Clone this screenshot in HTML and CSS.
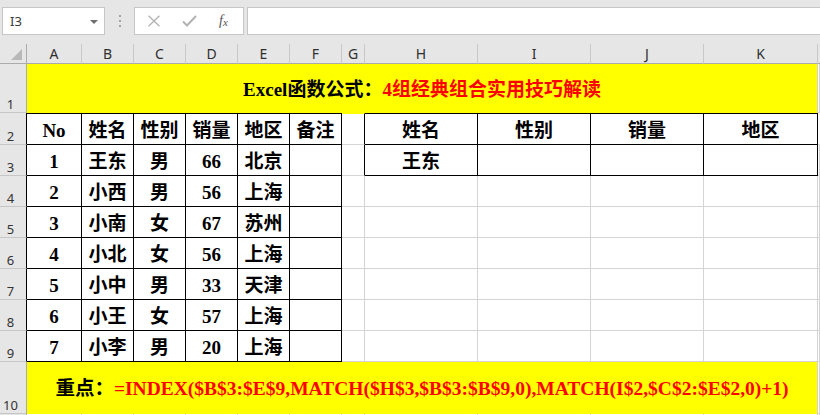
FILE: index.html
```html
<!DOCTYPE html>
<html>
<head>
<meta charset="utf-8">
<link rel="stylesheet" href="styles.css">
</head>
<body>
<div class="app">
  <div class="toolbar">
    <div class="namebox">
      <span class="ref">I3</span>
      <span class="dd"></span>
    </div>
    <div class="grip"><i></i><i></i><i></i></div>
    <div class="fbtns">
      <svg class="ico" width="14" height="12" viewBox="0 0 14 12"><path d="M1.5 0.8 L12.5 11.2 M12.5 0.8 L1.5 11.2" stroke="#b3b3b3" stroke-width="1.4" fill="none"/></svg>
      <svg class="ico" width="15" height="12" viewBox="0 0 15 12"><path d="M1 6.5 L5 10.5 L14 1" stroke="#b3b3b3" stroke-width="2" fill="none"/></svg>
      <span class="fx"><i>f</i><sub>x</sub></span>
    </div>
    <div class="finput"></div>
  </div>

  <div class="sheet">
    <!-- column header row -->
    <div class="corner"><span class="tri"></span></div>
    <div class="ch">A</div><div class="ch">B</div><div class="ch">C</div><div class="ch">D</div><div class="ch">E</div><div class="ch">F</div><div class="ch">G</div><div class="ch">H</div><div class="ch">I</div><div class="ch">J</div><div class="ch">K</div><div class="ch end"></div>

    <!-- row 1 -->
    <div class="rh">1</div>
    <div class="merged title"><span class="blk">Excel函数公式：</span><span class="red">4组经典组合实用技巧解读</span></div>
    <div class="c"></div>

    <!-- row 2 -->
    <div class="rh tb r2">2</div>
    <div class="c t top">No</div><div class="c t top">姓名</div><div class="c t top">性别</div><div class="c t top">销量</div><div class="c t top">地区</div><div class="c t top">备注</div>
    <div class="c gcol top ytop"></div>
    <div class="c t top">姓名</div><div class="c t top">性别</div><div class="c t top">销量</div><div class="c t top">地区</div>
    <div class="c top ytop wtop"></div>

    <!-- row 3 -->
    <div class="rh tb">3</div>
    <div class="c t">1</div><div class="c t">王东</div><div class="c t">男</div><div class="c t">66</div><div class="c t">北京</div><div class="c t"></div>
    <div class="c gcol"></div>
    <div class="c t">王东</div><div class="c t"></div><div class="c t"></div><div class="c t"></div>
    <div class="c"></div>

    <!-- row 4 -->
    <div class="rh tb">4</div>
    <div class="c t">2</div><div class="c t">小西</div><div class="c t">男</div><div class="c t">56</div><div class="c t">上海</div><div class="c t"></div>
    <div class="c"></div><div class="c"></div><div class="c"></div><div class="c"></div><div class="c"></div><div class="c"></div>

    <!-- row 5 -->
    <div class="rh tb">5</div>
    <div class="c t">3</div><div class="c t">小南</div><div class="c t">女</div><div class="c t">67</div><div class="c t">苏州</div><div class="c t"></div>
    <div class="c"></div><div class="c"></div><div class="c"></div><div class="c"></div><div class="c"></div><div class="c"></div>

    <!-- row 6 -->
    <div class="rh tb">6</div>
    <div class="c t">4</div><div class="c t">小北</div><div class="c t">女</div><div class="c t">56</div><div class="c t">上海</div><div class="c t"></div>
    <div class="c"></div><div class="c"></div><div class="c"></div><div class="c"></div><div class="c"></div><div class="c"></div>

    <!-- row 7 -->
    <div class="rh tb">7</div>
    <div class="c t">5</div><div class="c t">小中</div><div class="c t">男</div><div class="c t">33</div><div class="c t">天津</div><div class="c t"></div>
    <div class="c"></div><div class="c"></div><div class="c"></div><div class="c"></div><div class="c"></div><div class="c"></div>

    <!-- row 8 -->
    <div class="rh tb">8</div>
    <div class="c t">6</div><div class="c t">小王</div><div class="c t">女</div><div class="c t">57</div><div class="c t">上海</div><div class="c t"></div>
    <div class="c"></div><div class="c"></div><div class="c"></div><div class="c"></div><div class="c"></div><div class="c"></div>

    <!-- row 9 -->
    <div class="rh tb">9</div>
    <div class="c t">7</div><div class="c t">小李</div><div class="c t">男</div><div class="c t">20</div><div class="c t">上海</div><div class="c t"></div>
    <div class="c"></div><div class="c"></div><div class="c"></div><div class="c"></div><div class="c"></div><div class="c"></div>

    <!-- row 10 -->
    <div class="rh">10</div>
    <div class="merged note"><span class="blk">重点：</span><span class="red">=INDEX($B$3:$E$9,MATCH($H$3,$B$3:$B$9,0),MATCH(I$2,$C$2:$E$2,0)+1)</span></div>
    <div class="c"></div>

    <!-- row 11 (only its top edge is visible) -->
    <div class="rh"></div>
    <div class="c"></div><div class="c"></div><div class="c"></div><div class="c"></div><div class="c"></div><div class="c"></div><div class="c"></div><div class="c"></div><div class="c"></div><div class="c"></div><div class="c"></div><div class="c"></div>
  </div>
</div>
</body>
</html>
```

FILE: styles.css
```css
* { box-sizing: border-box; }
html, body { margin: 0; padding: 0; }
body {
  width: 820px;
  height: 415px;
  overflow: hidden;
  background: #ffffff;
  font-family: "Noto Sans", "Liberation Sans", sans-serif;
}
.app {
  width: 820px;
  height: 415px;
  overflow: hidden;
  display: flex;
  flex-direction: column;
}

/* ---------- toolbar ---------- */
.toolbar {
  height: 44px;
  flex: none;
  background: #e6e6e6;
  display: flex;
  align-items: flex-start;
  padding-top: 7px;
  padding-left: 2px;
}
.namebox {
  width: 103px;
  height: 28px;
  background: #ffffff;
  border: 1px solid #c6c6c6;
  display: flex;
  align-items: center;
  justify-content: space-between;
  padding: 0 6px 0 7px;
}
.ref {
  font-size: 13px;
  color: #3a3a3a;
  font-family: "Noto Sans", sans-serif;
  letter-spacing: 0.2px;
}
.dd {
  width: 0;
  height: 0;
  border-left: 4px solid transparent;
  border-right: 4px solid transparent;
  border-top: 4px solid #6f6f6f;
  margin-top: 1px;
}
.grip {
  width: 29px;
  height: 28px;
  display: flex;
  flex-direction: column;
  align-items: center;
  justify-content: center;
  gap: 3px;
}
.grip i {
  display: block;
  width: 2px;
  height: 2px;
  background: #a3a3a3;
}
.fbtns {
  width: 110px;
  height: 28px;
  background: #ffffff;
  border: 1px solid #c6c6c6;
  display: flex;
  align-items: center;
  padding-left: 12px;
}
.fbtns .ico:first-child { margin-right: 21px; }
.fbtns .ico:nth-child(2) { margin-right: 22px; }
.fx {
  font-family: "Liberation Serif", serif;
  color: #555555;
  font-size: 14px;
  line-height: 1;
  margin-top: -1px;
}
.fx i { font-style: italic; }
.fx sub {
  font-size: 11px;
  font-style: italic;
  vertical-align: -1px;
}
.finput {
  flex: 1;
  height: 28px;
  margin-left: 3px;
  background: #ffffff;
  border: 1px solid #c6c6c6;
  border-right: none;
}

/* ---------- sheet ---------- */
.sheet {
  flex: 1;
  display: grid;
  grid-template-columns: 27px 55px 52px 52px 52px 52px 52px 23px 113px 113px 113px 114px 2px;
  grid-template-rows: 20px 49px 32px 31px 31px 31px 31px 31px 31px 31px 52px 20px;
  overflow: hidden;
}
.corner {
  background: #e6e6e6;
  border-right: 1px solid #ababab;
  border-bottom: 1px solid #ababab;
  position: relative;
}
.tri {
  position: absolute;
  right: 4px;
  bottom: 3px;
  width: 0;
  height: 0;
  border-left: 11px solid transparent;
  border-bottom: 11px solid #b8b8b8;
}
.ch {
  background: #e6e6e6;
  border-right: 1px solid #c9c9c9;
  border-bottom: 1px solid #ababab;
  font-family: "Noto Sans", sans-serif;
  font-size: 14px;
  color: #2f2f2f;
  display: flex;
  align-items: center;
  justify-content: center;
  line-height: 1;
  padding-top: 1px;
}
.ch.end { border-right: none; }
.rh {
  background: #e6e6e6;
  border-right: 1px solid #ababab;
  border-bottom: 1px solid #c6c6c6;
  font-family: "Noto Sans", sans-serif;
  font-size: 13px;
  color: #333333;
  display: flex;
  align-items: flex-end;
  justify-content: center;
  padding-right: 5px;
  line-height: 14px;
  padding-bottom: 1px;
}
.rh.tb { border-right-color: #000000; }

.c {
  background: #ffffff;
  border-right: 1px solid #d4d4d4;
  border-bottom: 1px solid #d4d4d4;
  display: flex;
  align-items: center;
  justify-content: center;
  font-family: "Liberation Serif", "Noto Sans CJK SC", serif;
  font-size: 19px;
  font-weight: bold;
  color: #000000;
  line-height: 1;
  padding-top: 2px;
}
.c.t {
  border-right-color: #000000;
  border-bottom-color: #000000;
}
.c.top { border-top: 1px solid #000000; }
.c.ytop { border-top-color: #ffff00; }
.c.wtop { border-top-color: #ffffff; border-right-color: #ffffff; }
.c.gcol { border-right-color: #000000; }

.merged {
  grid-column: 2 / 13;
  background: #ffff00;
  border-right: 1px solid #d4d4d4;
  display: flex;
  align-items: center;
  justify-content: center;
  font-family: "Liberation Serif", "Noto Sans CJK SC", serif;
  font-weight: bold;
  line-height: 1;
  white-space: nowrap;
}
.merged.title { font-size: 19px; padding-top: 1px; }
.merged.note { font-size: 19.5px; padding-top: 1px; }
.blk { color: #000000; }
.red { color: #ff0000; }
```
